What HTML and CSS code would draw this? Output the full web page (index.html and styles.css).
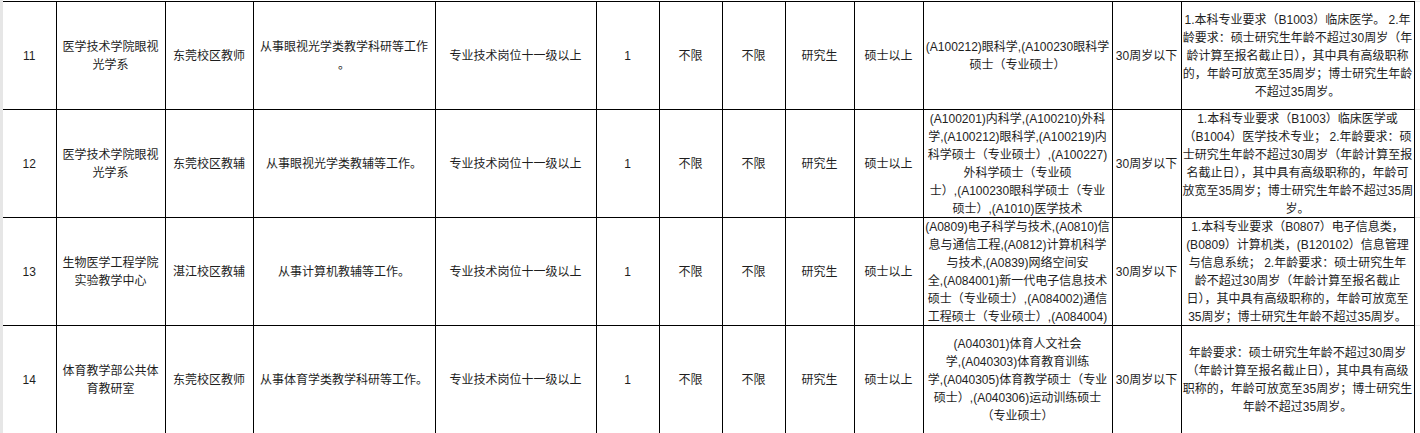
FILE: index.html
```html
<!DOCTYPE html>
<html lang="zh-CN">
<head>
<meta charset="utf-8">
<title>招聘岗位表</title>
<link rel="stylesheet" href="styles.css">
</head>
<body>
<div class="page">
  <div class="strip"></div>
  <table class="jobs">
    <colgroup>
      <col class="c-no"><col class="c-dept"><col class="c-campus"><col class="c-duty"><col class="c-level">
      <col class="c-num"><col class="c-lim"><col class="c-lim"><col class="c-edu"><col class="c-deg">
      <col class="c-major"><col class="c-age"><col class="c-note"><col class="c-edge">
    </colgroup>
    <tbody>
      <tr>
        <td class="first"><div class="cell">11</div></td>
        <td><div class="cell">医学技术学院眼视<br>光学系</div></td>
        <td><div class="cell">东莞校区教师</div></td>
        <td><div class="cell">从事眼视光学类教学科研等工作<br>。</div></td>
        <td><div class="cell">专业技术岗位十一级以上</div></td>
        <td><div class="cell">1</div></td>
        <td><div class="cell">不限</div></td>
        <td><div class="cell">不限</div></td>
        <td><div class="cell">研究生</div></td>
        <td><div class="cell">硕士以上</div></td>
        <td><div class="cell">(A100212)眼科学,(A100230眼科学<br>硕士（专业硕士）</div></td>
        <td><div class="cell">30周岁以下</div></td>
        <td><div class="cell">1.本科专业要求（B1003）临床医学。 2.年<br>龄要求：硕士研究生年龄不超过30周岁（年<br>龄计算至报名截止日），其中具有高级职称<br>的，年龄可放宽至35周岁；博士研究生年龄<br>不超过35周岁。</div></td>
        <td class="edge"></td>
      </tr>
      <tr>
        <td class="first"><div class="cell">12</div></td>
        <td><div class="cell">医学技术学院眼视<br>光学系</div></td>
        <td><div class="cell">东莞校区教辅</div></td>
        <td><div class="cell">从事眼视光学类教辅等工作。</div></td>
        <td><div class="cell">专业技术岗位十一级以上</div></td>
        <td><div class="cell">1</div></td>
        <td><div class="cell">不限</div></td>
        <td><div class="cell">不限</div></td>
        <td><div class="cell">研究生</div></td>
        <td><div class="cell">硕士以上</div></td>
        <td><div class="cell">(A100201)内科学,(A100210)外科<br>学,(A100212)眼科学,(A100219)内<br>科学硕士（专业硕士）,(A100227)<br>外科学硕士（专业硕<br>士）,(A100230眼科学硕士（专业<br>硕士）,(A1010)医学技术</div></td>
        <td><div class="cell">30周岁以下</div></td>
        <td><div class="cell">1.本科专业要求（B1003）临床医学或<br>（B1004）医学技术专业； 2.年龄要求：硕<br>士研究生年龄不超过30周岁（年龄计算至报<br>名截止日），其中具有高级职称的，年龄可<br>放宽至35周岁；博士研究生年龄不超过35周<br>岁。</div></td>
        <td class="edge"></td>
      </tr>
      <tr>
        <td class="first"><div class="cell">13</div></td>
        <td><div class="cell">生物医学工程学院<br>实验教学中心</div></td>
        <td><div class="cell">湛江校区教辅</div></td>
        <td><div class="cell">从事计算机教辅等工作。</div></td>
        <td><div class="cell">专业技术岗位十一级以上</div></td>
        <td><div class="cell">1</div></td>
        <td><div class="cell">不限</div></td>
        <td><div class="cell">不限</div></td>
        <td><div class="cell">研究生</div></td>
        <td><div class="cell">硕士以上</div></td>
        <td><div class="cell">(A0809)电子科学与技术,(A0810)信<br>息与通信工程,(A0812)计算机科学<br>与技术,(A0839)网络空间安<br>全,(A084001)新一代电子信息技术<br>硕士（专业硕士）,(A084002)通信<br>工程硕士（专业硕士）,(A084004)</div></td>
        <td><div class="cell">30周岁以下</div></td>
        <td><div class="cell">1.本科专业要求（B0807）电子信息类，<br>(B0809）计算机类，(B120102）信息管理<br>与信息系统； 2.年龄要求：硕士研究生年<br>龄不超过30周岁（年龄计算至报名截止<br>日），其中具有高级职称的，年龄可放宽至<br>35周岁；博士研究生年龄不超过35周岁。</div></td>
        <td class="edge"></td>
      </tr>
      <tr>
        <td class="first"><div class="cell">14</div></td>
        <td><div class="cell">体育教学部公共体<br>育教研室</div></td>
        <td><div class="cell">东莞校区教师</div></td>
        <td><div class="cell">从事体育学类教学科研等工作。</div></td>
        <td><div class="cell">专业技术岗位十一级以上</div></td>
        <td><div class="cell">1</div></td>
        <td><div class="cell">不限</div></td>
        <td><div class="cell">不限</div></td>
        <td><div class="cell">研究生</div></td>
        <td><div class="cell">硕士以上</div></td>
        <td><div class="cell">(A040301)体育人文社会<br>学,(A040303)体育教育训练<br>学,(A040305)体育教学硕士（专业<br>硕士）,(A040306)运动训练硕士<br>（专业硕士）</div></td>
        <td><div class="cell">30周岁以下</div></td>
        <td><div class="cell">年龄要求：硕士研究生年龄不超过30周岁<br>（年龄计算至报名截止日），其中具有高级<br>职称的，年龄可放宽至35周岁；博士研究生<br>年龄不超过35周岁。</div></td>
        <td class="edge"></td>
      </tr>
    </tbody>
  </table>
</div>
</body>
</html>
```

FILE: styles.css
```css
html, body {
  margin: 0;
  padding: 0;
  background: #ffffff;
}

body {
  font-family: "Liberation Sans", "Noto Sans CJK SC", sans-serif;
  font-size: 12px;
  color: #1e1e1e;
  overflow: hidden;
}

.page {
  display: flex;
  align-items: flex-start;
  height: 433px;
  overflow: hidden;
}

.strip {
  flex: 0 0 3px;
  align-self: stretch;
  background: #e6e6e6;
}

.jobs {
  border-collapse: collapse;
  table-layout: fixed;
  width: 1417px;
  margin-top: 1px;
}

.c-no { width: 53px; }
.c-dept { width: 109px; }
.c-campus { width: 88px; }
.c-duty { width: 182px; }
.c-level { width: 161px; }
.c-num { width: 63px; }
.c-lim { width: 63px; }
.c-edu { width: 69px; }
.c-deg { width: 69px; }
.c-major { width: 189px; }
.c-age { width: 69px; }
.c-note { width: 233px; }
.c-edge { width: 6px; }

.jobs td {
  border: 1px solid #000000;
  padding: 0;
  vertical-align: middle;
}

.jobs td.first {
  border-left: none;
}

.jobs td.edge {
  border-top: 1px solid #e2e2e2;
  border-bottom: 1px solid #e2e2e2;
  border-right: none;
}

.cell {
  height: 107px;
  display: flex;
  flex-direction: column;
  justify-content: center;
  overflow: hidden;
  text-align: center;
  line-height: 18px;
  white-space: nowrap;
  padding: 0 1px;
}
```
